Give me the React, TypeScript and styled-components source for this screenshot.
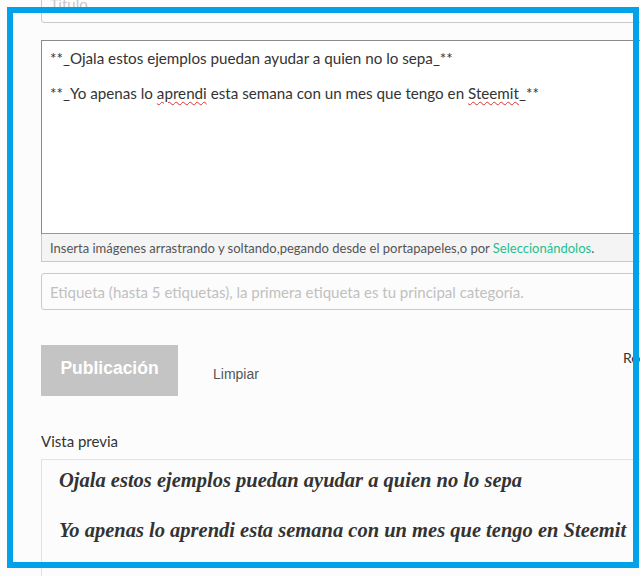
import React from 'react';
import styled, { createGlobalStyle } from 'styled-components';

const GlobalStyle = createGlobalStyle`
  html, body {
    margin: 0;
    height: 100%;
    overflow: hidden;
    background: #fcfcfc;
  }
  body {
    font-family: Lato, 'Noto Sans', sans-serif;
    color: #333;
  }
`;

export default () => (
  <>
    <GlobalStyle />
    <Page>
      <TitleInput>Título</TitleInput>
      <Editor>
        <EditorLine>**_Ojala estos ejemplos puedan ayudar a quien no lo sepa_**</EditorLine>
        <EditorLine>
          **_Yo apenas lo <Misspelled>aprendi</Misspelled> esta semana con un mes que tengo en{' '}
          <Misspelled>Steemit</Misspelled>_**
        </EditorLine>
      </Editor>
      <DropHint>
        Inserta imágenes arrastrando y soltando,pegando desde el portapapeles,o por{' '}
        <HintLink>Seleccionándolos</HintLink>.
      </DropHint>
      <TagInput>Etiqueta (hasta 5 etiquetas), la primera etiqueta es tu principal categoría.</TagInput>
      <ActionRow>
        <PublishButton disabled>Publicación</PublishButton>
        <ClearLink>Limpiar</ClearLink>
        <Rewards>Recompensas: Por defecto (50% / 50%)</Rewards>
      </ActionRow>
      <PreviewLabel>Vista previa</PreviewLabel>
      <Preview>
        <PreviewPara>Ojala estos ejemplos puedan ayudar a quien no lo sepa</PreviewPara>
        <PreviewPara>Yo apenas lo aprendi esta semana con un mes que tengo en Steemit</PreviewPara>
      </Preview>
    </Page>
    <Highlight />
  </>
);

const Page = styled.div`
  width: 660px;
  margin-top: -15px;
  padding-left: 41px;
  display: flex;
  flex-direction: column;
`;

const TitleInput = styled.div`
  height: 38px;
  box-sizing: border-box;
  border: 1px solid #cacaca;
  border-radius: 3px;
  background: #fcfcfc;
  padding: 0 8px;
  display: flex;
  align-items: center;
  font-size: 15px;
  color: #c8c8c8;
`;

const Editor = styled.div`
  margin-top: 17px;
  height: 194px;
  box-sizing: border-box;
  border: 1px solid #8a8a8a;
  border-bottom-color: #999;
  background: #fff;
  padding: 9px 8px;
  font-size: 15.2px;
  line-height: 17.5px;
  color: #333;
`;

const EditorLine = styled.p`
  margin: 0 0 17.5px;
  white-space: nowrap;
`;

const Misspelled = styled.span`
  text-decoration: underline wavy #e03030;
  text-decoration-thickness: 1px;
  text-underline-offset: 2px;
`;

const DropHint = styled.div`
  height: 28px;
  box-sizing: border-box;
  border: 1px solid #cacaca;
  border-top: 0;
  background: #f4f4f4;
  padding: 0 8px;
  display: flex;
  align-items: center;
  font-size: 13px;
  color: #555;
  white-space: pre;
`;

const HintLink = styled.span`
  color: #1fbf8f;
`;

const TagInput = styled.div`
  margin-top: 11px;
  height: 37px;
  box-sizing: border-box;
  border: 1px solid #cacaca;
  border-radius: 3px;
  background: #fcfcfc;
  padding: 0 8px;
  display: flex;
  align-items: center;
  font-size: 15px;
  color: #c0c0c0;
  white-space: nowrap;
`;

const ActionRow = styled.div`
  margin-top: 35px;
  display: flex;
  align-items: center;
  > * {
    flex-shrink: 0;
  }
`;

const PublishButton = styled.button`
  width: 137px;
  height: 51px;
  border: 0;
  background: #c4c4c4;
  color: #fff;
  font-family: 'Liberation Sans', Arial, sans-serif;
  font-weight: bold;
  font-size: 17.5px;
  padding: 0 0 4px;
`;

const ClearLink = styled.span`
  margin-left: 35px;
  margin-top: 6px;
  font-family: 'Liberation Sans', Arial, sans-serif;
  font-size: 14px;
  color: #555;
`;

const Rewards = styled.span`
  margin-left: 364px;
  align-self: flex-start;
  margin-top: 4px;
  font-size: 14px;
  color: #333;
  white-space: nowrap;
`;

const PreviewLabel = styled.div`
  margin-top: 35px;
  font-size: 15px;
  line-height: 20px;
  color: #333;
`;

const Preview = styled.div`
  margin-top: 8px;
  height: 200px;
  border: 1px solid #e2e2e2;
  padding: 8px 17px;
  background: #fcfcfc;
`;

const PreviewPara = styled.p`
  margin: 0 0 26px;
  font-family: 'Liberation Serif', 'Times New Roman', serif;
  font-style: italic;
  font-weight: bold;
  font-size: 20.5px;
  line-height: 24px;
  color: #333;
  white-space: nowrap;
`;

const Highlight = styled.div`
  position: fixed;
  left: 7px;
  top: 7px;
  width: 632px;
  height: 561px;
  box-sizing: border-box;
  border: 6px solid #00a2e8;
  pointer-events: none;
`;
